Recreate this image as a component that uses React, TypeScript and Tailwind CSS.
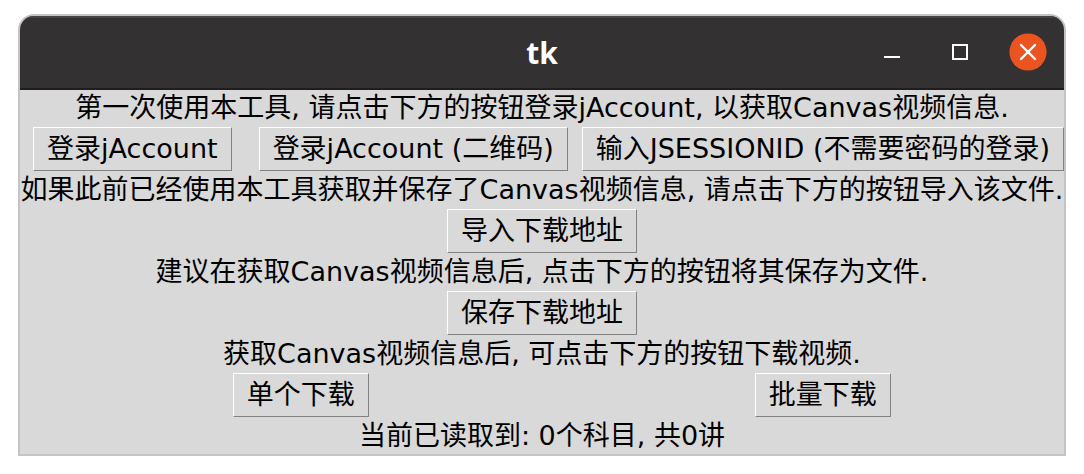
import type { ReactNode } from "react";

function Label({ children }: { children: ReactNode }) {
  return <p className="col-span-3 h-9 text-center leading-9 whitespace-nowrap">{children}</p>;
}

function Button({ children }: { children: ReactNode }) {
  return (
    <button
      type="button"
      className="my-px h-11 border border-t-white border-l-white border-r-[#828282] border-b-[#828282] bg-[#d9d9d9] px-[13px] leading-9 whitespace-nowrap"
    >
      {children}
    </button>
  );
}

export default function App() {
  return (
    <div className="min-h-screen bg-white px-[18px] pt-3.5 pb-[18px] text-black" lang="zh-CN">
      <div className="overflow-hidden rounded-t-2xl border-2 border-[#c4c4c4] bg-[#d9d9d9]">
        <header className="grid h-[74px] grid-cols-3 items-center border-t-2 border-b-2 border-t-[#454444] border-b-[#1f1d1e] bg-[#333132] text-white">
          <h1 className="col-start-2 text-center font-['Noto_Sans',sans-serif] text-[30px] leading-9 font-bold">tk</h1>
          <div className="flex items-center justify-end gap-[30px] pr-[17px] pb-0.5">
            <button type="button" aria-label="Minimize" className="size-[38px]">
              <svg viewBox="0 0 38 38"><path d="M11 24h16" stroke="currentColor" strokeWidth="2" /></svg>
            </button>
            <button type="button" aria-label="Maximize" className="size-[38px]">
              <svg viewBox="0 0 38 38" fill="none"><path d="M12 12h14v14H12z" stroke="currentColor" strokeWidth="2" /></svg>
            </button>
            <button type="button" aria-label="Close" className="size-[38px]">
              <svg viewBox="0 0 38 38" fill="none">
                <circle cx="19" cy="19" r="18.6" fill="#e95420" />
                <path d="m12 12 14 14m0-14L12 26" stroke="currentColor" strokeWidth="2.4" strokeLinecap="round" />
              </svg>
            </button>
          </div>
        </header>
        <main className="grid grid-cols-[2fr_3fr_auto] justify-items-center font-['DejaVu_Sans','Noto_Sans_CJK_SC',sans-serif] text-[27px]">
          <Label>第一次使用本工具, 请点击下方的按钮登录jAccount, 以获取Canvas视频信息.</Label>
          <Button>登录jAccount</Button>
          <Button>登录jAccount (二维码)</Button>
          <Button>输入JSESSIONID (不需要密码的登录)</Button>
          <Label>如果此前已经使用本工具获取并保存了Canvas视频信息, 请点击下方的按钮导入该文件.</Label>
          <div className="col-span-3 flex"><Button>导入下载地址</Button></div>
          <Label>建议在获取Canvas视频信息后, 点击下方的按钮将其保存为文件.</Label>
          <div className="col-span-3 flex"><Button>保存下载地址</Button></div>
          <Label>获取Canvas视频信息后, 可点击下方的按钮下载视频.</Label>
          <div className="col-span-2 flex"><Button>单个下载</Button></div>
          <Button>批量下载</Button>
          <Label>当前已读取到: 0个科目, 共0讲</Label>
        </main>
      </div>
    </div>
  );
}
